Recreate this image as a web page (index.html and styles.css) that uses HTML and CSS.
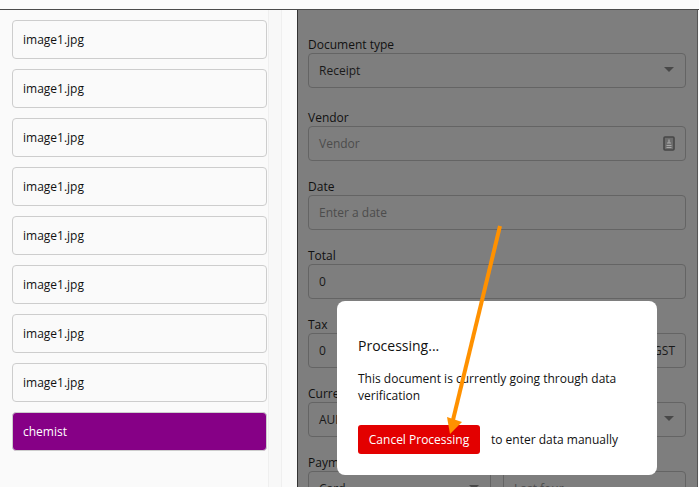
FILE: index.html
```html
<!DOCTYPE html>
<html lang="en">
<head>
  <meta charset="UTF-8" />
  <title>Processing</title>
  <link rel="stylesheet" href="styles.css">
</head>
<body>
  <div class="topbar"></div>
  <div class="main">
    <div class="sidebar">
      <div class="list">
        <div class="item">image1.jpg</div>
        <div class="item">image1.jpg</div>
        <div class="item">image1.jpg</div>
        <div class="item">image1.jpg</div>
        <div class="item">image1.jpg</div>
        <div class="item">image1.jpg</div>
        <div class="item">image1.jpg</div>
        <div class="item">image1.jpg</div>
        <div class="item active">chemist</div>
      </div>
      <div class="gutter"></div>
    </div>

    <div class="panel">
      <div class="field first">
        <label>Document type</label>
        <div class="input"><span>Receipt</span><span class="caret"></span></div>
      </div>
      <div class="field">
        <label>Vendor</label>
        <div class="input muted">
          <span>Vendor</span>
          <svg class="contact" width="12" height="15" viewBox="0 0 12 15">
            <rect x="1" y="1" width="10" height="13" rx="1" fill="#6c6c6c" stroke="#474747" stroke-width="1.6"/>
            <path d="M6 3.500v4M4 7h4M3.500 9.500h5M3.500 11.500h5" stroke="#a8a8a8" stroke-width="1.2" fill="none"/>
          </svg>
        </div>
      </div>
      <div class="field">
        <label>Date</label>
        <div class="input muted"><span>Enter a date</span></div>
      </div>
      <div class="field">
        <label>Total</label>
        <div class="input"><span>0</span></div>
      </div>
      <div class="field">
        <label>Tax</label>
        <div class="input"><span>0</span><span class="addon">GST</span></div>
      </div>
      <div class="field">
        <label>Currency</label>
        <div class="input"><span>AUD</span><span class="caret"></span></div>
      </div>
      <div class="field">
        <label>Payment</label>
        <div class="split">
          <div class="input"><span>Card</span><span class="caret"></span></div>
          <div class="input muted"><span>Last four</span></div>
        </div>
      </div>

      <div class="modal">
        <h2>Processing...</h2>
        <p>This document is currently going through data verification</p>
        <div class="modal-footer">
          <button>Cancel Processing</button>
          <span>to enter data manually</span>
        </div>
      </div>
    </div>
    <div class="edge"></div>

    <svg class="arrow" width="699" height="487" viewBox="0 0 699 487">
      <path d="M500 226L453 420" stroke="#ff9100" stroke-width="4" fill="none"/>
      <path d="M447 417L462 422L450 434Z" fill="#ff9100"/>
    </svg>
  </div>
</body>
</html>
```

FILE: styles.css
```css
* {
  box-sizing: border-box;
}

html, body {
  height: 100%;
}

body {
  margin: 0;
  overflow: hidden;
  background-color: #fafafa;
  font-family: "Open Sans", sans-serif;
  font-size: 12px;
  color: #111;
}

.topbar {
  height: 10px;
  border-bottom: 1px solid #4a4a4a;
}

.main {
  display: flex;
  height: 477px;
}

.sidebar {
  display: flex;
  width: 298px;
  flex-shrink: 0;
  border-right: 1px solid #333;
}

.list {
  display: flex;
  flex-direction: column;
  gap: 10px;
  width: 268px;
  padding: 10px 0 0 12px;
}

.gutter {
  width: 14px;
  background-color: #f8f8f8;
  border-left: 1px solid #efefef;
  border-right: 1px solid #efefef;
}

.item {
  display: flex;
  align-items: center;
  height: 39px;
  width: 255px;
  padding-left: 10px;
  background-color: #fafafa;
  border: 1px solid #cdcdcd;
  border-radius: 4px;
}

.item.active {
  background-color: #860086;
  color: #fff;
}

.panel {
  width: 400px;
  height: 477px;
  padding: 27px 11px 0 10px;
  overflow: hidden;
  background-color: #7e7e7e;
  border-right: 1px solid #555;
}

.edge {
  flex: 1;
}

.field {
  margin-bottom: 18px;
}

.field.first {
  margin-bottom: 22px;
}

.field label {
  display: block;
  line-height: 16px;
  color: #111;
}

.input {
  display: flex;
  justify-content: space-between;
  align-items: center;
  height: 35px;
  padding: 0 10px;
  border: 1px solid #646464;
  border-radius: 4px;
  color: #191919;
}

.input.muted {
  color: #4c4c4c;
}

.caret {
  width: 0;
  height: 0;
  margin-right: 1px;
  margin-top: -2px;
  border-left: 5px solid transparent;
  border-right: 5px solid transparent;
  border-top: 5px solid #484848;
}

.split {
  display: flex;
  gap: 12px;
}

.split .input {
  flex: 1;
}

.modal {
  position: absolute;
  left: 337px;
  top: 301px;
  width: 320px;
  height: 174px;
  padding: 35px 21px 0 21px;
  background-color: #fff;
  border-radius: 8px;
}

.modal h2 {
  margin: 0 0 14px 0;
  font-size: 14px;
  font-weight: 400;
  line-height: 20px;
}

.modal p {
  margin: 0 0 21px 0;
  line-height: 17px;
}

.modal-footer {
  display: flex;
  align-items: center;
  gap: 11px;
}

.modal-footer button {
  width: 122px;
  height: 29px;
  padding: 0;
  background-color: #e30000;
  color: #fff;
  border: none;
  border-radius: 3px;
  font-family: inherit;
  font-size: 12px;
  font-weight: 500;
}

.arrow {
  position: absolute;
  left: 0;
  top: 0;
}
```
